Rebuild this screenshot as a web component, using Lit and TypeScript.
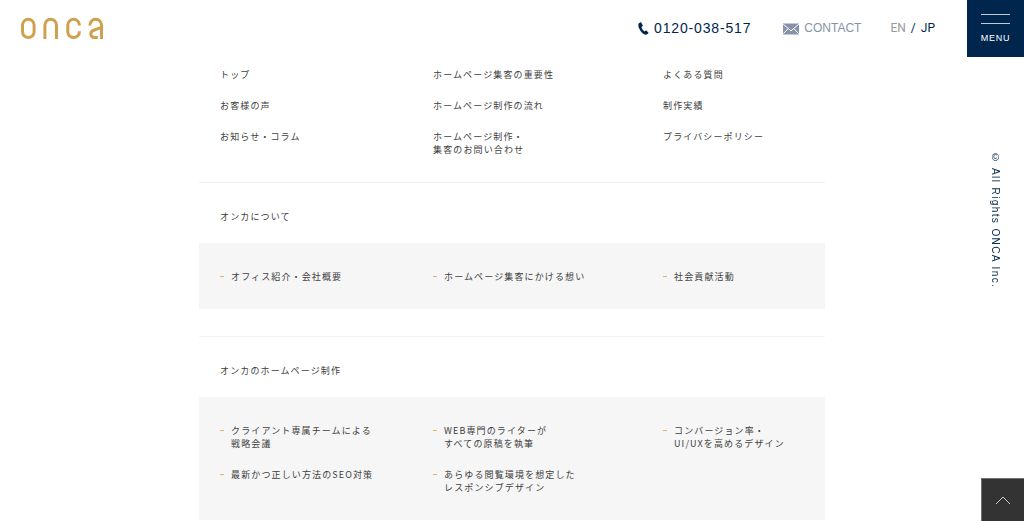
import { LitElement, html, css, svg } from "lit";
import { customElement } from "lit/decorators.js";

type Item = string[];

const mainLinks: Item[] = [
  ["トップ"],
  ["ホームページ集客の重要性"],
  ["よくある質問"],
  ["お客様の声"],
  ["ホームページ制作の流れ"],
  ["制作実績"],
  ["お知らせ・コラム"],
  ["ホームページ制作・", "集客のお問い合わせ"],
  ["プライバシーポリシー"],
];

const groups: { title: string; items: Item[] }[] = [
  {
    title: "オンカについて",
    items: [["オフィス紹介・会社概要"], ["ホームページ集客にかける想い"], ["社会貢献活動"]],
  },
  {
    title: "オンカのホームページ制作",
    items: [
      ["クライアント専属チームによる", "戦略会議"],
      ["WEB専門のライターが", "すべての原稿を執筆"],
      ["コンバージョン率・", "UI/UXを高めるデザイン"],
      ["最新かつ正しい方法のSEO対策"],
      ["あらゆる閲覧環境を想定した", "レスポンシブデザイン"],
    ],
  },
];

const logoStrokes = svg`
  <rect x="2.5" y="3.3" width="11.6" height="18.3" rx="5.8" />
  <path d="M24.9 22.9V9.1a5.8 5.8 0 0 1 11.6 0v13.8" />
  <path d="M59.4 9.6v-.5a5.8 5.8 0 0 0-11.6 0v6.7a5.8 5.8 0 0 0 11.6 0v-.6" />
  <path d="M69.9 9.4v-.3a5.8 5.8 0 0 1 11.6 0v13.8" />
  <path d="M81.5 11.4l-8.4 3.1a3.7 3.7 0 0 0 1.2 7.1h3.6" />`;

@customElement("app-root")
export class AppRoot extends LitElement {
  static styles = css`
    :host {
      display: block;
      background: #fff;
      color: #404040;
      font-family: "Noto Sans CJK JP", sans-serif;
      font-size: 9px;
      line-height: 13px;
      letter-spacing: 0.125em;
    }
    a {
      color: inherit;
      text-decoration: none;
    }
    ul {
      list-style: none;
      margin: 0;
      padding: 0;
    }
    svg {
      display: block;
      flex: none;
    }
    .header {
      display: flex;
      align-items: center;
      height: 57px;
      padding-left: 20px;
      color: #00264d;
      font-family: "Liberation Sans", Arial, sans-serif;
    }
    .logo {
      margin-right: auto;
    }
    .logo svg {
      fill: none;
      stroke: #cfa14e;
      stroke-width: 3;
    }
    .tel,
    .contact {
      display: flex;
      align-items: center;
      gap: 5px;
    }
    .tel {
      margin-right: 32px;
      font-size: 14px;
      letter-spacing: 0.06em;
    }
    .contact {
      margin-right: 29px;
      color: #8493aa;
      font-size: 12px;
      letter-spacing: 0;
    }
    .lang {
      display: flex;
      gap: 5px;
      margin-right: 32px;
      font-family: Roboto, sans-serif;
      font-size: 12px;
      letter-spacing: 0;
    }
    .other {
      color: #999;
    }
    .menu {
      display: flex;
      flex-direction: column;
      align-items: center;
      align-self: stretch;
      gap: 8px;
      width: 57px;
      padding: 14px 0 0;
      border: 0;
      background: #00264d;
      color: #fff;
      font-family: inherit;
      font-size: 9px;
      line-height: 13px;
      letter-spacing: 0.08em;
      cursor: pointer;
    }
    .bar {
      width: 29px;
      height: 1px;
      background: #c3ccd6;
    }
    .sitemap {
      width: 626px;
      max-width: 100%;
      margin: 0 auto;
      padding-top: 11px;
    }
    .grid {
      display: grid;
      grid-template-columns: 213fr 230fr 162fr;
      row-gap: 18px;
      padding-left: 21px;
    }
    .group {
      margin-top: 27px;
      border-top: 1px solid #f3f3f3;
    }
    .main + .group {
      margin-top: 26px;
    }
    .title {
      margin: 0;
      padding: 27px 21px 20px;
      font-size: inherit;
      font-weight: 400;
    }
    .panel {
      padding-top: 27px;
      padding-bottom: 26px;
      background: #f6f6f6;
    }
    .line {
      display: block;
      white-space: nowrap;
    }
    .panel .entry {
      display: flex;
      gap: 7px;
    }
    .panel .entry::before {
      content: "";
      width: 4px;
      height: 1px;
      margin-top: 6px;
      background: #e0b468;
    }
    .rights {
      position: fixed;
      top: 152px;
      right: 22px;
      margin: 0;
      writing-mode: vertical-rl;
      color: #00264d;
      font-family: "Liberation Sans", Arial, sans-serif;
      font-size: 10px;
      letter-spacing: 0.14em;
    }
    .top {
      position: fixed;
      right: 0;
      bottom: 0;
      display: flex;
      align-items: center;
      justify-content: center;
      box-sizing: border-box;
      width: 43px;
      height: 43px;
      border: solid #707070;
      border-width: 1px 0 0 1px;
      background: #333;
    }
  `;

  private entry(lines: Item) {
    return html`<li>
      <a class="entry" href="#"><span>${lines.map((l) => html`<span class="line">${l}</span>`)}</span></a>
    </li>`;
  }

  render() {
    return html`
      <header class="header">
        <a class="logo" href="#" aria-label="onca">
          <svg width="84" height="25" viewBox="0 0 84 25">${logoStrokes}</svg>
        </a>
        <a class="tel" href="tel:0120038517">
          <svg width="11" height="13" viewBox="0 0 11 13" fill="#00264d">
            <path d="M2.5.3.9 1.2C-.2 2.3.2 5.6 2.4 8.7c2.1 3 4.8 4.4 6.3 3.8l1.5-1.1c.3-.2.3-.5.1-.8L8.6 8.7c-.2-.3-.5-.3-.8-.1l-1.2.8C5.5 9 3.6 6.3 3.5 4.9l1.1-.8c.3-.2.3-.5.1-.8L3.2.5C3 .2 2.8.1 2.5.3z" />
          </svg>
          <span>0120-038-517</span>
        </a>
        <a class="contact" href="#">
          <svg width="16" height="12" viewBox="0 0 16 12">
            <rect y=".5" width="16" height="11" fill="#8493aa" />
            <path d="M.2 1.2 8 7.8l7.8-6.6M.2 10.8l4.8-5M15.8 10.8 11 5.8" fill="none" stroke="#fff" />
          </svg>
          <span>CONTACT</span>
        </a>
        <nav class="lang" aria-label="Language">
          <a class="other" href="#">EN</a><span>/</span><a href="#">JP</a>
        </nav>
        <button class="menu" type="button">
          <span class="bar"></span><span class="bar"></span><span>MENU</span>
        </button>
      </header>
      <nav class="sitemap">
        <ul class="grid main">
          ${mainLinks.map((l) => this.entry(l))}
        </ul>
        ${groups.map(
          (g) => html`<section class="group">
            <h2 class="title"><a href="#">${g.title}</a></h2>
            <ul class="grid panel">
              ${g.items.map((l) => this.entry(l))}
            </ul>
          </section>`
        )}
      </nav>
      <p class="rights">© All Rights ONCA Inc.</p>
      <a class="top" href="#" aria-label="ページの先頭へ">
        <svg width="16" height="9" viewBox="0 0 16 9">
          <path d="M1 8l7-7 7 7" fill="none" stroke="#ccc" />
        </svg>
      </a>
    `;
  }
}
